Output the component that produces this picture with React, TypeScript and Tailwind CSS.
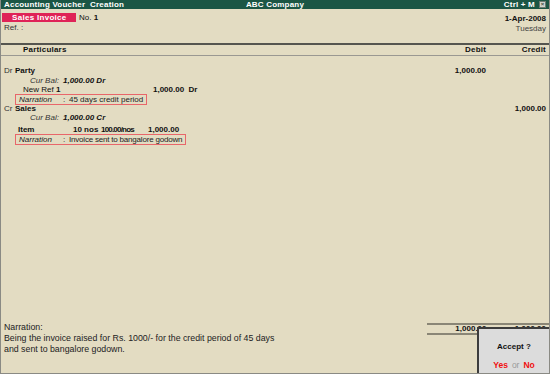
import React from "react";

const font = { fontFamily: '"Liberation Sans", Arial, sans-serif' };

function NarrationBox({ text, width, tight }: { text: string; width: string; tight?: boolean }) {
  return (
    <div className={`ml-[14px] h-[11px] border border-[#e8666a] flex items-center whitespace-nowrap text-[8px] text-[#222] ${width}`}>
      <span className="italic w-[47px] shrink-0 pl-[3px]">Narration</span>
      <span className="w-[6px] shrink-0">:</span>
      <span className={tight ? "shrink-0 tracking-[-0.2px]" : "shrink-0"}>{text}</span>
    </div>
  );
}

export default function App() {
  return (
    <div
      className="relative w-[550px] h-[374px] overflow-hidden bg-[#e3dcc2] border-l border-r border-b border-[#8a8a84] text-[#111] flex flex-col"
      style={font}
    >
      {/* Title bar */}
      <div className="h-[9px] bg-[#1b5645] text-white text-[8px] font-bold flex items-center px-[3px] tracking-[0.2px] whitespace-nowrap">
        <span className="flex-1">Accounting Voucher&nbsp; Creation</span>
        <span>ABC Company</span>
        <span className="flex-1 flex items-center justify-end">
          <span className="mr-[4px]">Ctrl + M</span>
          <span className="w-[7px] h-[7px] bg-[#cfd4cc] border border-[#6d7a72] text-[#3b4a42] text-[6px] leading-[5px] flex items-center justify-center">
            ×
          </span>
        </span>
      </div>

      {/* Voucher header */}
      <div className="flex justify-between pt-[4px] pr-[3px]">
        <div className="flex flex-col">
          <div className="flex items-center h-[9px]">
            <span className="ml-[1px] w-[74px] h-[9px] bg-[#df2357] text-white text-[8px] font-bold flex items-center pl-[10px] tracking-[0.3px]">
              Sales Invoice
            </span>
            <span className="ml-[3px] text-[8px]">
              No. <b>1</b>
            </span>
          </div>
          <span className="ml-[3px] mt-[1px] h-[10px] text-[8px] text-[#333] leading-[10px]">Ref. :</span>
        </div>
        <div className="flex flex-col items-end">
          <span className="h-[10px] text-[8px] font-bold leading-[10px] mt-[1px]">1-Apr-2008</span>
          <span className="h-[9px] text-[8px] text-[#444] leading-[9px]">Tuesday</span>
        </div>
      </div>

      {/* Column header */}
      <div className="mt-[10px] border-t-2 border-[#55554f]" />
      <div className="h-[10px] flex items-center text-[8px] font-bold pr-[3px] tracking-[0.2px]">
        <span className="ml-[22px] flex-1">Particulars</span>
        <span className="w-[60px] text-right">Debit</span>
        <span className="w-[60px] text-right">Credit</span>
      </div>
      <div className="border-t border-[#9a9892]" />

      {/* Entries */}
      <div className="mt-[10px] flex flex-col text-[8px] pr-[3px]">
        <div className="h-[10px] flex items-center">
          <span className="w-[14px] pl-[3px] text-[#333]">Dr</span>
          <span className="font-bold flex-1">Party</span>
          <span className="w-[60px] text-right font-bold">1,000.00</span>
          <span className="w-[60px]" />
        </div>
        <div className="h-[9px] flex items-center italic">
          <span className="ml-[29px] w-[33px] text-[#333]">Cur Bal:</span>
          <span className="font-bold">1,000.00 Dr</span>
        </div>
        <div className="h-[9px] flex items-center">
          <span className="ml-[22px] w-[33px]">New Ref</span>
          <span className="font-bold w-[97px]">1</span>
          <span className="font-bold">1,000.00&nbsp; Dr</span>
        </div>
        <NarrationBox text="45 days credit period" width="w-[132px]" />
        <div className="h-[8px] flex items-center">
          <span className="w-[14px] pl-[3px] text-[#333]">Cr</span>
          <span className="font-bold flex-1">Sales</span>
          <span className="w-[60px]" />
          <span className="w-[60px] text-right font-bold">1,000.00</span>
        </div>
        <div className="h-[9px] flex items-center italic">
          <span className="ml-[29px] w-[33px] text-[#333]">Cur Bal:</span>
          <span className="font-bold">1,000.00 Cr</span>
        </div>
        <div className="mt-[3px] h-[9px] flex items-center font-bold">
          <span className="ml-[17px] w-[55px]">Item</span>
          <span className="w-[28px]">10 nos</span>
          <span className="w-[47px] tracking-[-0.8px]">100.00/nos</span>
          <span>1,000.00</span>
        </div>
        <NarrationBox text="Invoice sent to bangalore godown" width="w-[171px]" tight />
      </div>

      {/* Footer: narration and totals */}
      <div className="mt-auto flex items-start pb-[18px]">
        <div className="flex-1 -mt-[1px] pl-[3px] text-[8.8px] leading-[11px] text-[#222]">
          <div>Narration:</div>
          <div>Being the invoice raised for Rs. 1000/- for the credit period of 45 days</div>
          <div>and sent to bangalore godown.</div>
        </div>
        <div className="w-[122px] flex flex-col">
          <div className="border-t-2 border-[#8a8676]" />
          <div className="flex items-center h-[8px] text-[8px] font-bold pr-[3px]">
            <span className="w-[60px] text-right">1,000.00</span>
            <span className="w-[60px] text-right">1,000.00</span>
          </div>
          <div className="border-t-2 border-[#8a8676]" />
        </div>
      </div>

      {/* Accept dialog */}
      <div className="absolute right-0 bottom-0 w-[72px] h-[46px] bg-[#dcdcdc] border-l-2 border-t-2 border-[#3c3c3c] flex flex-col items-center text-[8px] font-bold">
        <span className="mt-[12px]">Accept ?</span>
        <span className="mt-auto mb-[1px] text-[8.5px]">
          <span className="text-[#f01010]">Yes</span>
          <span className="text-[#9a9a9a] font-normal mx-[4px]">or</span>
          <span className="text-[#f01010]">No</span>
        </span>
      </div>
    </div>
  );
}
